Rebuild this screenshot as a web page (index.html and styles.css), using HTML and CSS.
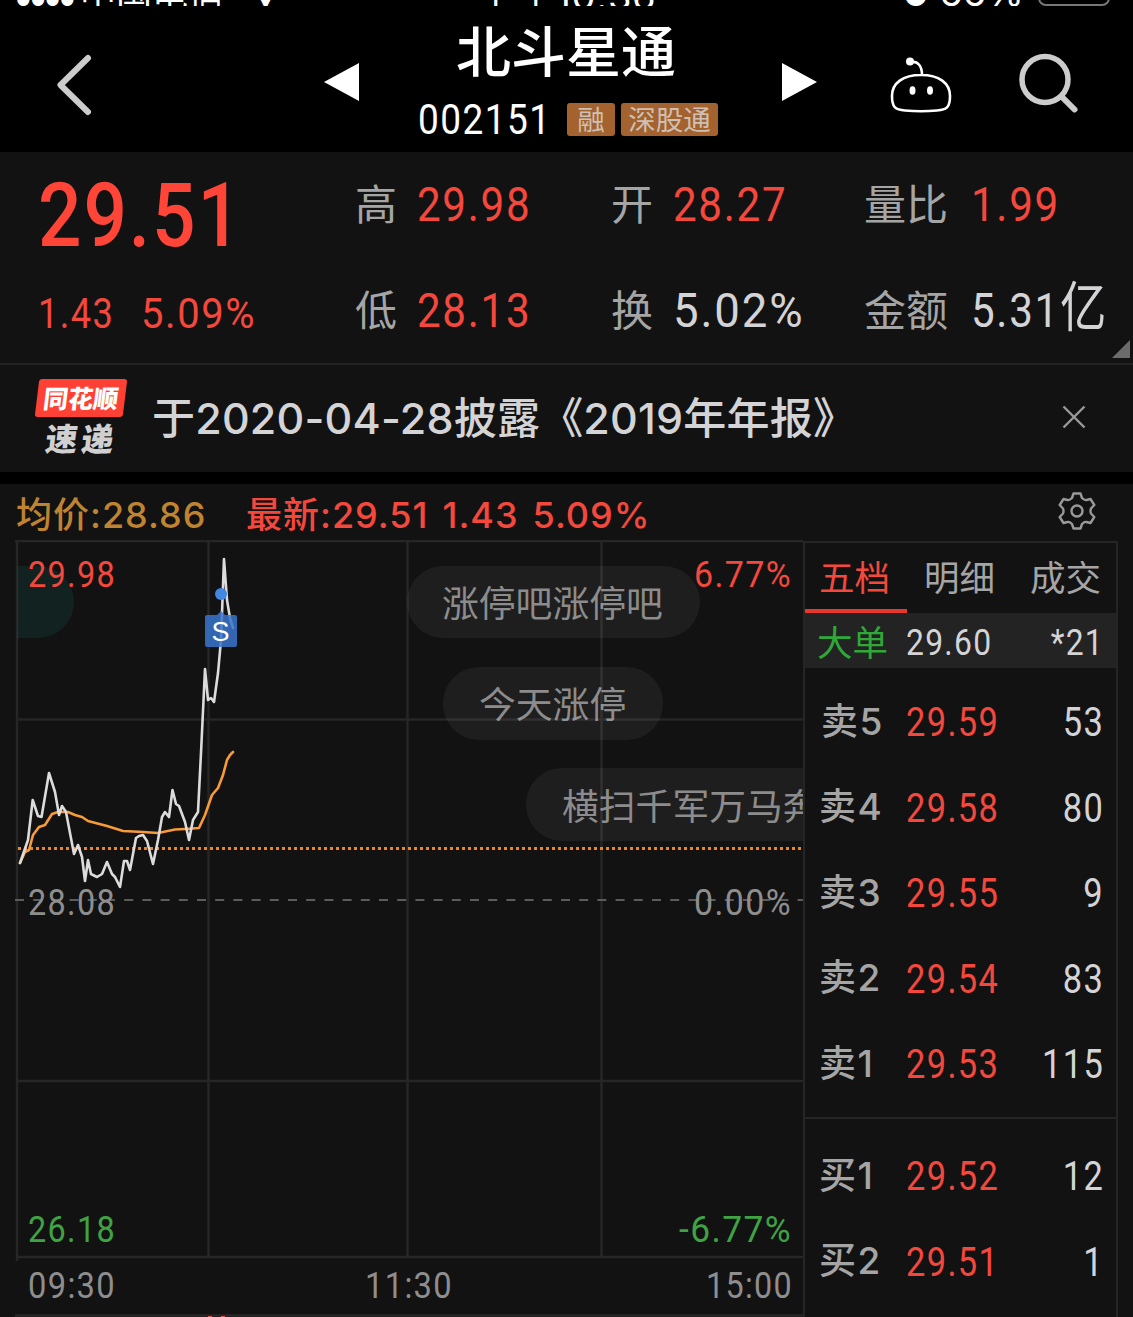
FILE: index.html
```html
<!DOCTYPE html>
<html lang="zh-CN">
<head>
  <meta charset="UTF-8">
  <meta name="viewport" content="width=device-width, initial-scale=1.0">
  <title>北斗星通 002151</title>
  <link rel="stylesheet" href="styles.css">
</head>
<body>
  <header class="header">
    <div class="status">
      <span class="signal">●●●●</span>
      <span class="carrier">中国电信</span>
      <span class="wifi">▾</span>
      <span class="clock">上午10:36</span>
      <span class="power"><small>●</small> 66%</span>
      <span class="battery"></span>
    </div>
    <div class="nav">
      <svg class="back" width="40" height="66" viewBox="0 0 40 66"><path d="M34 6 L6.500 33 L34 60" fill="none" stroke="#ccc" stroke-width="6" stroke-linecap="round" stroke-linejoin="round"/></svg>
      <svg class="prev" width="36" height="38" viewBox="0 0 36 38"><path d="M35 0V38L0 19Z" fill="#fff"/></svg>
      <div class="stock">
        <h1>北斗星通</h1>
        <div class="code">
          <span class="num">002151</span>
          <span class="tag">融</span>
          <span class="tag wide">深股通</span>
        </div>
      </div>
      <svg class="next" width="36" height="38" viewBox="0 0 36 38"><path d="M0 0V38L35 19Z" fill="#fff"/></svg>
      <svg class="robot" width="62" height="56" viewBox="0 0 62 56">
        <circle cx="20" cy="4.500" r="4" fill="#fff"/>
        <path d="M21 5C28 4 32 9 32 18M31 18C49 18 60 26 60 39C60 50 57 53 47 53.500C36 54.500 26 54.500 15 53.500C5 53 2 50 2 39C2 26 13 18 31 18Z" fill="none" stroke="#fff" stroke-width="2.600"/>
        <ellipse cx="22.500" cy="33.500" rx="3" ry="4.300" fill="#fff"/>
        <ellipse cx="40" cy="33.500" rx="3" ry="4.300" fill="#fff"/>
      </svg>
      <svg class="search" width="62" height="62" viewBox="0 0 62 62">
        <circle cx="27" cy="26.500" r="23" fill="none" stroke="#ccc" stroke-width="5.500"/>
        <path d="M44 44L56.500 56.500" stroke="#ccc" stroke-width="6" stroke-linecap="round"/>
      </svg>
    </div>
  </header>

  <section class="quote">
    <div class="price">
      <div class="last"><span class="num">29.51</span></div>
      <div class="change"><span class="num">1.43</span><span class="num pct">5.09%</span></div>
    </div>
    <dl class="stats">
      <div><dt>高</dt><dd class="up"><span class="num">29.98</span></dd></div>
      <div><dt>开</dt><dd class="up"><span class="num">28.27</span></dd></div>
      <div><dt class="long">量比</dt><dd class="up"><span class="num">1.99</span></dd></div>
      <div><dt>低</dt><dd class="up"><span class="num">28.13</span></dd></div>
      <div><dt>换</dt><dd><span class="num pct">5.02%</span></dd></div>
      <div><dt class="long">金额</dt><dd><span class="num">5.31<i>亿</i></span></dd></div>
    </dl>
    <span class="corner"></span>
  </section>

  <section class="news">
    <div class="brand">
      <div class="brand-top">同花顺</div>
      <div class="brand-bottom">速递</div>
    </div>
    <p>于2020-04-28披露《2019年年报》</p>
    <svg class="close" width="24" height="24" viewBox="0 0 24 24"><path d="M1.500 1.500L22.500 22.500M22.500 1.500L1.500 22.500" stroke="#999" stroke-width="2.400"/></svg>
  </section>

  <section class="info">
    <span class="avg">均价:28.86</span>
    <span class="now">最新:29.51</span>
    <span class="now">1.43</span>
    <span class="now">5.09%</span>
    <svg class="gear" width="40" height="40" viewBox="-20 -20 40 40">
      <path d="M-3.500 -17.500H3.500L5 -13Q7.500 -10.500 9.500 -11L13.500 -12L17.300 -6L14 -2.500Q13 0 14 2.500L17.300 6L13.500 12L9.500 11Q7.500 10.500 5 13L3.500 17.500H-3.500L-5 13Q-7.500 10.500 -9.500 11L-13.500 12L-17.300 6L-14 2.500Q-13 0 -14 -2.500L-17.300 -6L-13.500 -12L-9.500 -11Q-7.500 -10.500 -5 -13Z" fill="none" stroke="#999" stroke-width="2.400" stroke-linejoin="round"/>
      <circle r="5.500" fill="none" stroke="#999" stroke-width="2.400"/>
    </svg>
  </section>

  <main class="market">
    <!-- user units are page pixels, starting at 0,540 -->
    <svg class="chart" width="803" height="777" viewBox="0 540 803 777">
      <path class="teal" d="M17 566H38A36 36 0 0 1 38 638H17Z"/>
      <g class="bubbles">
        <rect x="407" y="566" width="293" height="72" rx="36"/>
        <rect x="443" y="667" width="220" height="73" rx="36"/>
        <rect x="526" y="768" width="400" height="73" rx="36"/>
        <text x="442" y="617">涨停吧涨停吧</text>
        <text x="479" y="718">今天涨停</text>
        <text x="562" y="820">横扫千军万马奔</text>
      </g>
      <path class="grid" d="M15 541H803M17 541V1261M208.500 541V1257M407.500 541V1257M601.500 541V1257M17 719.500H803M17 1081H803M17 1257H803M15 1315.500H803"/>
      <path class="zero" d="M15 900H803"/>
      <path class="avgline" d="M18 848.500H803"/>
      <polyline class="mean" points="20,863 25,852 29,850 33,835 39,827 45,825 52,814 58,812 68,812 75,815 82,817 88,821 107,826 123,831 143,832 158,833 175,829.500 185,829 199,828 205,815 212,795 218,788 223,775 227,760 230,755 233,752"/>
      <polyline class="line" points="20,863 28,840 32.700,800 38,816 41.500,817 49,773 55,792 59,815 62,806 66,812 74,854 78,845 82,857 85,881 88,860 91,874 97,877 102,874 107,862 112,874 115,877 120,887 124,861 127,861 130,870 136,838 139,836 143,835 147,841 153,864 158,840 162,817 165,812 169,817 172.500,790 176,804 179,806 185,822 189,840 193,820 198,812 201,753 205,669 208,700 211,698 214,702 218,673 221,640 224,559 227,600 230,618 233,628"/>
      <g class="sell">
        <circle cx="221" cy="594" r="6"/>
        <path d="M207 615H217L221 611L225 615H235Q237 615 237 617V645Q237 647 235 647H207Q205 647 205 645V617Q205 615 207 615Z"/>
        <text x="220.500" y="641">S</text>
      </g>
      <g class="scale">
        <text class="up" x="28" y="587" textLength="88" lengthAdjust="spacingAndGlyphs">29.98</text>
        <text class="up" x="694" y="587" textLength="98" lengthAdjust="spacingAndGlyphs">6.77%</text>
        <text x="28" y="915" textLength="88" lengthAdjust="spacingAndGlyphs">28.08</text>
        <text x="694" y="915" textLength="98" lengthAdjust="spacingAndGlyphs">0.00%</text>
        <text class="down" x="28" y="1242" textLength="88" lengthAdjust="spacingAndGlyphs">26.18</text>
        <text class="down" x="679" y="1242" textLength="113" lengthAdjust="spacingAndGlyphs">-6.77%</text>
        <text x="28" y="1298" textLength="88" lengthAdjust="spacingAndGlyphs">09:30</text>
        <text x="365" y="1298" textLength="88" lengthAdjust="spacingAndGlyphs">11:30</text>
        <text x="706" y="1298" textLength="87" lengthAdjust="spacingAndGlyphs">15:00</text>
      </g>
      <path d="M208 1316.500H212M221 1316.500H225" stroke="#f5483c" stroke-width="1"/>
    </svg>

    <aside class="book">
      <nav class="tabs">
        <span class="tab active">五档</span>
        <span class="tab">明细</span>
        <span class="tab">成交</span>
      </nav>
      <div class="row big"><b>大单</b><span class="num">29.60</span><span class="num vol">*21</span></div>
      <div class="sells">
        <div class="row first"><b>卖5</b><span class="num up">29.59</span><span class="num vol">53</span></div>
        <div class="row"><b>卖4</b><span class="num up">29.58</span><span class="num vol">80</span></div>
        <div class="row"><b>卖3</b><span class="num up">29.55</span><span class="num vol">9</span></div>
        <div class="row"><b>卖2</b><span class="num up">29.54</span><span class="num vol">83</span></div>
        <div class="row"><b>卖1</b><span class="num up">29.53</span><span class="num vol">115</span></div>
      </div>
      <div class="buys">
        <div class="row"><b>买1</b><span class="num up">29.52</span><span class="num vol">12</span></div>
        <div class="row"><b>买2</b><span class="num up">29.51</span><span class="num vol">1</span></div>
      </div>
    </aside>
  </main>
</body>
</html>
```
FILE: styles.css
```css
* {
  box-sizing: border-box;
}
body {
  margin: 0;
  width: 1133px;
  height: 1317px;
  overflow: hidden;
  background: #121213;
  color: #d4d4d6;
  font-family: Inter, "Noto Sans CJK SC", sans-serif;
}
h1, p, dl, dd {
  margin: 0;
}
.up {
  color: #f5483c;
}
/* narrow figures */
.num {
  display: inline-block;
  font-family: Roboto, "Noto Sans CJK SC", sans-serif;
  font-weight: 450;
  letter-spacing: 0.04em;
  line-height: 1;
  white-space: nowrap;
  transform: scaleX(0.86);
  transform-origin: left center;
}
.num.pct {
  transform: scaleX(0.93);
}

/* header */
.header {
  height: 152px;
  background: #000;
  color: #fff;
}
.status {
  display: flex;
  align-items: flex-end;
  height: 6px;
  overflow: hidden;
  font-size: 38px;
  line-height: 40px;
  white-space: nowrap;
}
.status span {
  flex: none;
  margin-bottom: -10px;
}
.status .signal {
  width: 66px;
  padding-left: 16px;
  font-size: 16px;
  line-height: 20px;
  margin-bottom: -4px;
}
.status .carrier {
  width: 174px;
  padding-left: 14px;
  font-size: 36px;
}
.status .wifi {
  width: 238px;
  padding-left: 16px;
}
.status .clock {
  width: 425px;
  letter-spacing: 0.7px;
}
.status .power {
  width: 135px;
  font-size: 38px;
}
.status small {
  font-size: 28px;
}
.status .battery {
  width: 72px;
  height: 30px;
  margin-bottom: 0;
  border: 2px solid #777;
  border-radius: 8px;
}
.nav {
  display: flex;
  align-items: flex-start;
}
.nav svg {
  flex: none;
}
.back {
  margin: 46px 0 0 54px;
}
.prev {
  margin: 57px 0 0 230px;
}
.stock {
  width: 318px;
  margin-left: 58px;
}
h1 {
  height: 92px;
  padding-left: 38px;
  font-size: 55px;
  font-weight: 500;
  line-height: 93px;
  white-space: nowrap;
}
.code {
  display: flex;
  height: 33px;
  margin-top: 5px;
}
.code .num {
  width: 149px;
  font-size: 43px;
  line-height: 33px;
}
.tag {
  width: 48px;
  margin-right: 6px;
  border-radius: 3px;
  background: #a4622f;
  color: #cfc0b5;
  font-size: 27.5px;
  line-height: 34px;
  text-align: center;
}
.tag.wide {
  width: 97px;
}
.next {
  margin: 57px 0 0 46px;
}
.robot {
  margin: 51px 0 0 72px;
}
.search {
  margin: 47px 0 0 66px;
}

/* quote */
.quote {
  position: relative;
  display: flex;
  height: 213px;
  border-bottom: 2px solid #222;
}
.price {
  width: 355px;
  padding-left: 38px;
  color: #ff4438;
}
.last {
  height: 126px;
  font-size: 89px;
  line-height: 124px;
}
.last .num {
  font-weight: 500;
  letter-spacing: 0.025em;
}
.change {
  display: flex;
  margin-top: 15px;
  font-size: 42px;
  color: #f5483c;
}
.change .num {
  width: 103px;
}
.change .pct {
  transform: scaleX(0.95);
}
.stats {
  display: grid;
  grid-template-columns: 256px 253px 269px;
  grid-template-rows: 106px 106px;
}
.stats div {
  display: flex;
  align-items: center;
  height: 106px;
}
.stats dt {
  width: 62px;
  color: #a5a5a5;
  font-size: 42px;
  line-height: 1;
}
.stats dt.long {
  width: 107px;
  white-space: nowrap;
}
.stats dd {
  padding-bottom: 4px;
  font-size: 49px;
}
.stats i {
  font-style: normal;
  font-weight: 400;
  font-size: 54px;
}
.corner {
  position: absolute;
  right: 3px;
  bottom: 5px;
  border: 9px solid #6b6b6b;
  border-top-color: transparent;
  border-left-color: transparent;
}

/* news */
.news {
  display: flex;
  height: 119px;
  border-bottom: 12px solid #000;
}
.brand {
  width: 118px;
  padding: 14px 0 0 37px;
  font-family: "Noto Sans CJK SC", sans-serif;
  font-weight: 900;
}
.brand-top {
  width: 88px;
  height: 38px;
  border-radius: 3px;
  background: #ff4034;
  color: #fff;
  font-size: 25px;
  line-height: 37px;
  text-align: center;
  transform: skewX(-7deg);
}
.brand-bottom {
  padding-left: 9px;
  font-size: 32px;
  line-height: 40px;
  letter-spacing: 4px;
  color: #d0d0d0;
  transform: skewX(-7deg);
}
.news p {
  width: 910px;
  padding-left: 34px;
  font-size: 43px;
  font-weight: 450;
  letter-spacing: 0.2px;
  line-height: 106px;
  white-space: nowrap;
}
.close {
  margin: 40px 0 0 34px;
}

/* chart caption */
.info {
  display: flex;
  height: 56px;
  padding-left: 16px;
  font-size: 36px;
  font-weight: 450;
  letter-spacing: 1px;
  line-height: 62px;
  white-space: nowrap;
}
.avg {
  width: 230px;
  color: #c08430;
}
.now {
  color: #f5483c;
  margin-right: 14px;
}
.gear {
  margin: 7px 36px 0 auto;
}

/* chart */
.market {
  display: flex;
  height: 777px;
}
.chart {
  flex: none;
}
.chart .teal {
  fill: #122221;
}
.bubbles rect {
  fill: #1e1e1f;
}
.bubbles text {
  fill: #8c8c8c;
  font-family: "Noto Sans CJK SC", sans-serif;
  font-size: 36.8px;
}
.chart .grid {
  fill: none;
  stroke: rgba(255, 255, 255, 0.085);
  stroke-width: 2.5;
}
.chart .zero {
  stroke: #5c5c5c;
  stroke-width: 2.2;
  stroke-dasharray: 9 9.2;
}
.chart .avgline {
  stroke: #e8862c;
  stroke-width: 3;
  stroke-dasharray: 3 3;
}
.chart polyline {
  fill: none;
  stroke-width: 2.6;
  stroke-linejoin: round;
  stroke-linecap: round;
}
.chart .mean {
  stroke: #f79a38;
}
.chart .line {
  stroke: #dcdcdc;
}
.sell circle {
  fill: #4287e4;
}
.sell path {
  fill: #3a76cc;
  fill-opacity: 0.85;
}
.sell text {
  fill: #fff;
  font-family: "Liberation Sans", sans-serif;
  font-size: 27px;
  text-anchor: middle;
}
.scale text {
  fill: #8e8e8e;
  font-family: Roboto, sans-serif;
  font-size: 37px;
  font-weight: 450;
  letter-spacing: 1.5px;
}
.scale .up {
  fill: #f5483c;
}
.scale .down {
  fill: #3fa343;
}

/* order book */
.book {
  width: 315px;
  margin-top: 1px;
  border: solid #252526;
  border-width: 2px 2px 0;
}
.tabs {
  display: flex;
  height: 70px;
  color: #a5a5a5;
  font-size: 35.5px;
  line-height: 72px;
}
.tab {
  flex: none;
  width: 106px;
}
.tab:last-child {
  width: 80px;
}
.tab.active {
  width: 102px;
  margin-right: 17px;
  padding-left: 14px;
  border-bottom: 4px solid #e8372c;
  color: #f5483c;
}
.row {
  display: flex;
  align-items: center;
  height: 85.5px;
  padding: 0 14px;
  font-size: 40px;
}
.row b {
  width: 87px;
  padding-bottom: 6px;
  color: #a5a5a5;
  font-size: 37px;
  font-weight: 500;
  letter-spacing: 1.5px;
  white-space: nowrap;
}
.row.first b {
  padding-left: 2px;
}
.row .num {
  padding-top: 3px;
}
.row .vol {
  margin: 0 -2px 0 auto;
  transform-origin: right center;
}
.row.big {
  height: 55px;
  padding-left: 12px;
  background: #232324;
  font-size: 37px;
}
.row.big b {
  width: 89px;
  padding-bottom: 0;
  color: #2fa838;
  font-size: 35.5px;
  font-weight: 400;
  letter-spacing: 0;
}
.sells {
  height: 451px;
  padding-top: 11px;
  border-bottom: 2px solid #252526;
}
.buys {
  padding-top: 14px;
}
```
